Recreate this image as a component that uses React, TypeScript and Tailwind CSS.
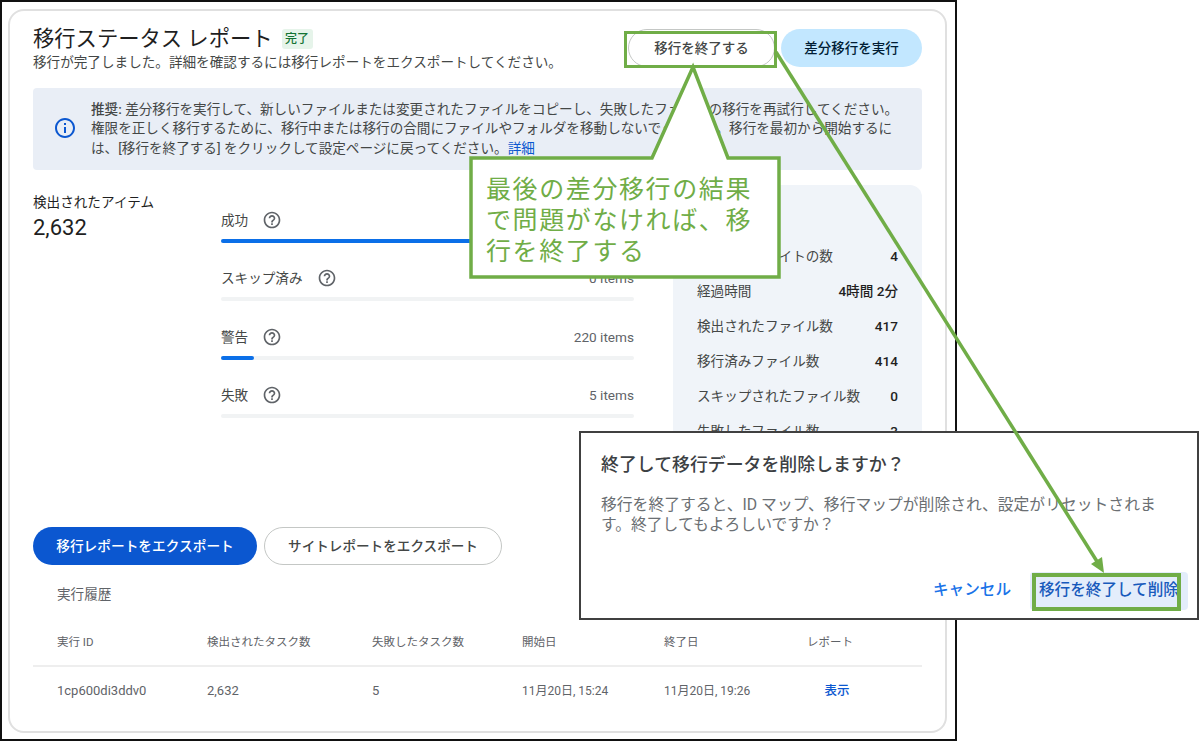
const font = { fontFamily: 'Roboto, "Noto Sans CJK JP", sans-serif' };

function Help() {
  return (
    <svg width="20" height="20" viewBox="0 0 24 24" fill="#5f6368">
      <path d="M11 18h2v-2h-2v2zm1-16C6.48 2 2 6.48 2 12s4.48 10 10 10 10-4.48 10-10S17.52 2 12 2zm0 18c-4.41 0-8-3.59-8-8s3.59-8 8-8 8 3.59 8 8-3.59 8-8 8zm0-14c-2.21 0-4 1.79-4 4h2c0-1.1.9-2 2-2s2 .9 2 2c0 2-3 1.75-3 5h2c0-2.25 3-2.5 3-5 0-2.21-1.79-4-4-4z" />
    </svg>
  );
}

function Info() {
  return (
    <svg width="24" height="24" viewBox="0 0 24 24" fill="#0b57d0">
      <path d="M11 7h2v2h-2V7zm0 4h2v6h-2v-6zm1-9C6.48 2 2 6.48 2 12s4.48 10 10 10 10-4.48 10-10S17.52 2 12 2zm0 18c-4.41 0-8-3.59-8-8s3.59-8 8-8 8 3.59 8 8-3.59 8-8 8z" />
    </svg>
  );
}

const progress = [
  { label: '成功', value: '2,407 items', pct: 91 },
  { label: 'スキップ済み', value: '0 items', pct: 0 },
  { label: '警告', value: '220 items', pct: 8 },
  { label: '失敗', value: '5 items', pct: 0 },
];

const stats = [
  ['検出されたサイトの数', '4'],
  ['経過時間', '4時間 2分'],
  ['検出されたファイル数', '417'],
  ['移行済みファイル数', '414'],
  ['スキップされたファイル数', '0'],
  ['失敗したファイル数', '3'],
];

const cols = ['w-[150px]', 'w-[165px]', 'w-[150px]', 'w-[142px]', 'w-[143px]'];

export default function App() {
  return (
    <div className="relative w-[1200px] h-[742px] bg-white overflow-hidden" style={font}>
      <div className="w-[957px] h-[741px] border-2 border-[#111] pl-[6px] pt-[7px] bg-white">
        <div className="w-[939px] h-[724px] rounded-[16px] border-2 border-[#e0e0e0] pl-[23px] pr-[22px] pt-[18px]">
          {/* header */}
          <div className="flex justify-between items-start h-[60px]">
            <div>
              <div className="flex items-center h-[20px]">
                <span className="text-[21.3px] leading-[20px] text-[#1f1f1f] whitespace-nowrap">移行ステータス レポート</span>
                <span className="ml-[9px] h-[20px] w-[31px] rounded-[3px] bg-[#e6f4ea] text-[#137333] text-[12px] font-medium flex items-center justify-center">完了</span>
              </div>
              <p className="mt-[4px] text-[13.6px] leading-[18px] text-[#444746]">移行が完了しました。詳細を確認するには移行レポートをエクスポートしてください。</p>
            </div>
            <div className="flex gap-[6px] mr-[1px]">
              <button className="w-[147px] h-[38px] rounded-full border border-[#c4c7c5] bg-white text-[13.5px] font-medium text-[#444746]">移行を終了する</button>
              <button className="w-[141px] h-[38px] rounded-full bg-[#c2e7ff] text-[13.5px] font-medium text-[#001d35]">差分移行を実行</button>
            </div>
          </div>

          {/* banner */}
          <div className="mt-[-1px] mr-[1px] h-[82px] rounded-[4px] bg-[#e9eef6] flex items-center pl-[20px] gap-[14px]">
            <div className="mt-[-2px] shrink-0"><Info /></div>
            <p className="w-[810px] text-[13.6px] leading-[19.5px] text-[#444746]">
              <b className="font-medium">推奨:</b> 差分移行を実行して、新しいファイルまたは変更されたファイルをコピーし、失敗したファイルの移行を再試行してください。権限を正しく移行するために、移行中または移行の合間にファイルやフォルダを移動しないでください。移行を最初から開始するには、[移行を終了する] をクリックして設定ページに戻ってください。<span className="text-[#0b57d0]">詳細</span>
            </p>
          </div>

          {/* stats */}
          <div className="mt-[15px] flex h-[342px]">
            <div className="w-[188px] pt-[8px]">
              <p className="text-[13.6px] leading-[18px] text-[#1f1f1f]">検出されたアイテム</p>
              <p className="mt-[3px] text-[22px] leading-[28px] text-[#1f1f1f]">2,632</p>
            </div>
            <div className="w-[413px] pt-[24px]">
              {progress.map((p) => (
                <div key={p.label} className="h-[58.4px]">
                  <div className="flex items-center justify-between h-[22px]">
                    <div className="flex items-center gap-[14px] text-[13.6px] text-[#444746]">
                      <span>{p.label}</span>
                      <Help />
                    </div>
                    <span className="text-[13.6px] text-[#5f6368]">{p.value}</span>
                  </div>
                  <div className="mt-[8px] h-[4px] rounded-full bg-[#f1f3f4]">
                    <div className="h-full rounded-full bg-[#0b6fe8]" style={{ width: `${p.pct}%` }} />
                  </div>
                </div>
              ))}
            </div>
            <div className="ml-[39px] w-[249px] h-[320px] rounded-[12px] bg-[#f0f4f9] px-[24px] pt-[54px]">
              {stats.map(([k, v]) => (
                <div key={k} className="flex justify-between items-center h-[35px] text-[13.6px]">
                  <span className="text-[#444746]">{k}</span>
                  <span className="font-medium text-[#1f1f1f]">{v}</span>
                </div>
              ))}
            </div>
          </div>

          {/* export */}
          <div className="flex gap-[7px]">
            <button className="w-[224px] h-[38px] rounded-full bg-[#0b57d0] text-white text-[13.7px] font-medium">移行レポートをエクスポート</button>
            <button className="w-[238px] h-[38px] rounded-full border border-[#c4c7c5] bg-white text-[#444746] text-[13.6px] font-medium">サイトレポートをエクスポート</button>
          </div>

          {/* history */}
          <p className="mt-[20px] ml-[24px] text-[13.6px] leading-[18px] text-[#5f6368]">実行履歴</p>
          <div className="mt-[24px] mr-[1px] flex h-[40px] pl-[24px] pt-[7px] border-b-2 border-[#eeeeee] text-[11.5px] text-[#5f6368]">
            {['実行 ID', '検出されたタスク数', '失敗したタスク数', '開始日', '終了日', 'レポート'].map((h, i) => (
              <div key={h} className={cols[i] ?? 'w-[100px]'}>{h}</div>
            ))}
          </div>
          <div className="flex items-center pl-[24px] pt-[15px] text-[13px] leading-[18px] text-[#5f6368]">
            <div className="w-[150px] whitespace-nowrap">1cp600di3ddv0</div>
            <div className="w-[165px]">2,632</div>
            <div className="w-[150px]">5</div>
            <div className="w-[142px] text-[12px] whitespace-nowrap">11月20日, 15:24</div>
            <div className="w-[143px] text-[12px] whitespace-nowrap">11月20日, 19:26</div>
            <div className="w-[60px] text-center text-[12.5px] text-[#0b57d0] font-medium">表示</div>
          </div>
        </div>
      </div>

      {/* green rectangle around end button */}
      <div className="absolute left-[624px] top-[31px] w-[153px] h-[37px] border-[3px] border-[#70ad47]" />

      {/* callout shape */}
      <svg className="absolute left-0 top-0" width="1200" height="742">
        <polygon points="471,158 652,158 693,67 728,158 779,158 779,277 471,277" fill="#fff" stroke="#70ad47" strokeWidth="3.5" />
      </svg>
      <div className="absolute left-[486px] top-[174px] w-[285px] text-[25px] leading-[31px] tracking-[1.6px] text-[#70ad47]">
        最後の差分移行の結果で問題がなければ、移行を終了する
      </div>

      {/* dialog */}
      <div className="absolute left-[579px] top-[431px] w-[620px] h-[189px] border-2 border-[#404040] bg-white px-[20px] pt-[20px]">
        <h2 className="text-[17.9px] leading-[24px] font-medium text-[#3c4043]">終了して移行データを削除しますか？</h2>
        <p className="mt-[18px] text-[15.8px] leading-[20px] text-[#6b6f73] w-[565px]">移行を終了すると、ID マップ、移行マップが削除され、設定がリセットされます。終了してもよろしいですか？</p>
        <div className="absolute right-[9px] bottom-[8px] flex items-center gap-[19px]">
          <span className="text-[15.6px] font-medium text-[#1a73e8]">キャンセル</span>
          <span className="h-[38px] w-[158px] pl-[9px] rounded-[4px] bg-[#e3edfb] flex items-center text-[15.6px] font-medium text-[#185abc] whitespace-nowrap">移行を終了して削除</span>
        </div>
      </div>

      {/* green rectangle around delete button, arrow */}
      <svg className="absolute left-0 top-0" width="1200" height="742">
        <line x1="776" y1="52" x2="1098" y2="563" stroke="#70ad47" strokeWidth="3.5" />
        <polygon points="1104,573 1091,564 1102,557" fill="#70ad47" />
        <rect x="1034" y="575" width="145" height="34" fill="none" stroke="#70ad47" strokeWidth="4" />
      </svg>
    </div>
  );
}
